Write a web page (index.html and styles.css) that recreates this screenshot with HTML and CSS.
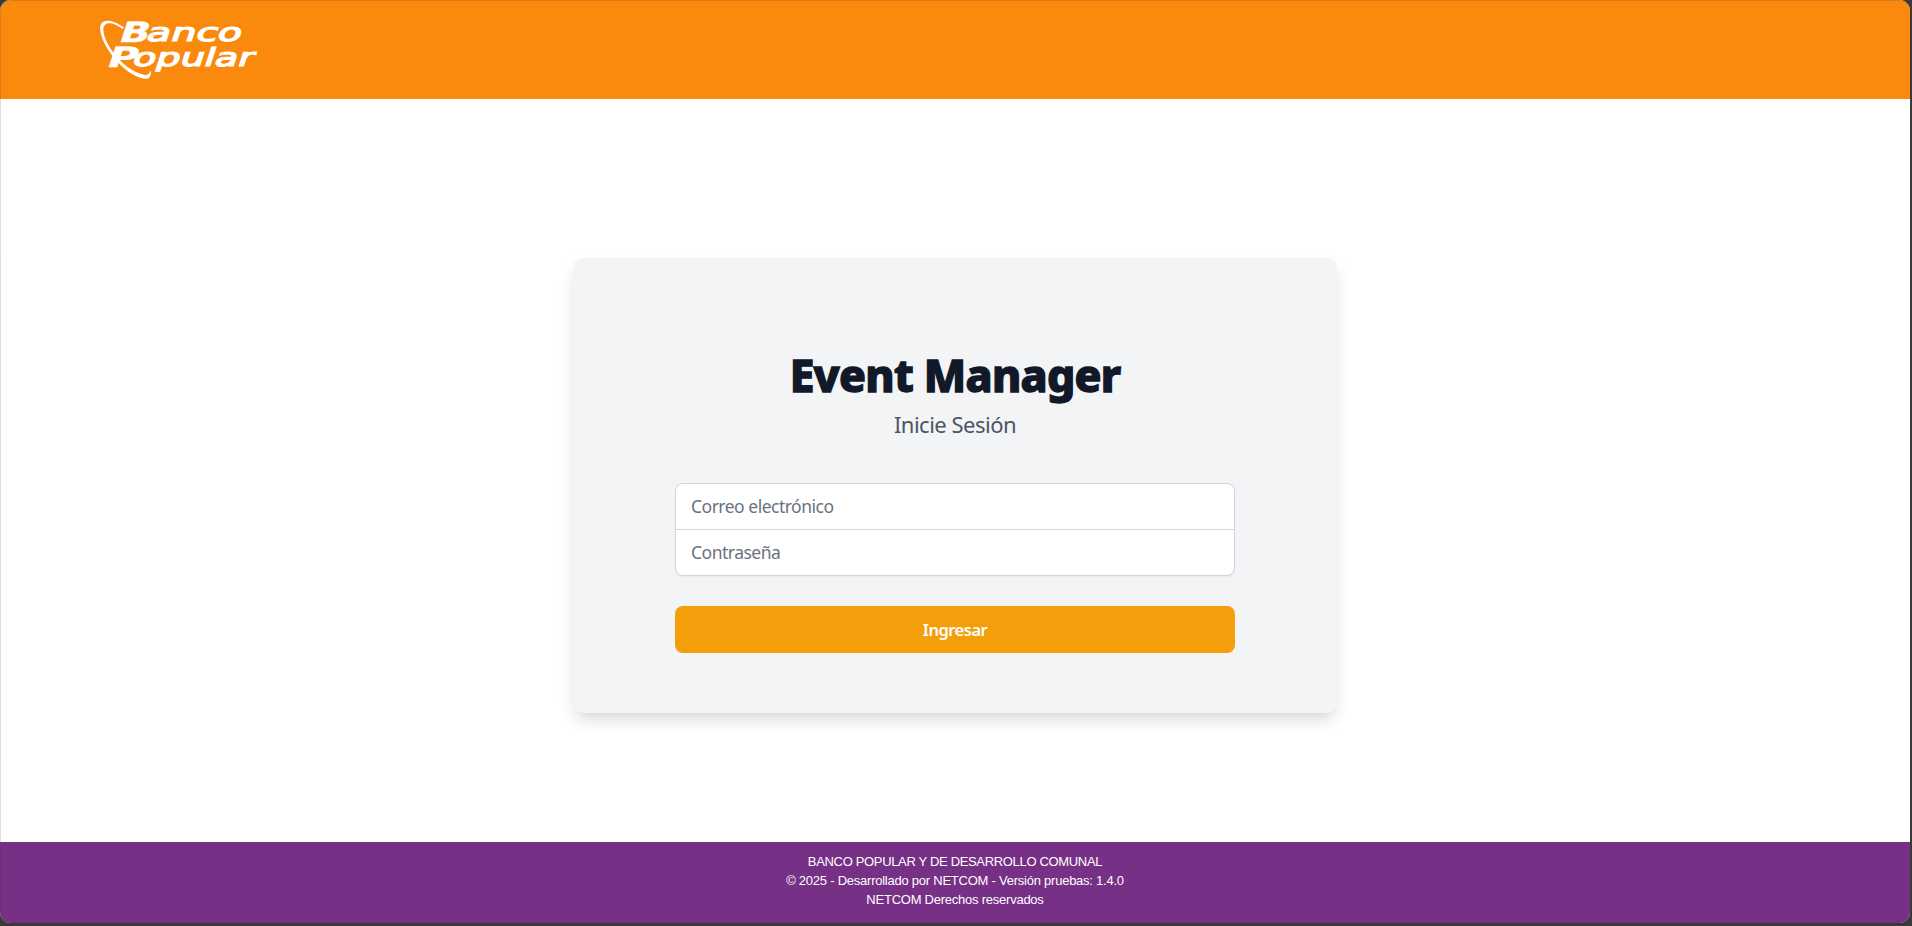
FILE: index.html
```html
<!DOCTYPE html>
<html lang="es">
<head>
<meta charset="utf-8">
<title>Event Manager</title>
<link rel="stylesheet" href="styles.css">
</head>
<body>
<div class="window">
  <header class="header">
    <svg class="logo" width="170" height="70" viewBox="94 14 170 70" role="img" aria-label="Banco Popular">
      <path class="swoosh" d="M124 27.500C112 18.500 99 17.500 100.200 30C102 47 124 75.500 145 78.800C149.500 79 151 77 151 70C149.500 74 147.500 75.500 144 74.800C124 70.500 105 46 103.400 31C102.500 21 112 21 122.500 28.900Z"/>
      <g class="logo-text">
        <text class="cap" transform="translate(117.500 41.500) skewX(-18)" textLength="30" lengthAdjust="spacingAndGlyphs">B</text>
        <text class="rest" transform="translate(145 41) skewX(-18)" textLength="95" lengthAdjust="spacingAndGlyphs">anco</text>
        <text class="cap" transform="translate(105.500 66.500) skewX(-18)" textLength="30" lengthAdjust="spacingAndGlyphs">P</text>
        <text class="rest" transform="translate(131 66) skewX(-18)" textLength="121" lengthAdjust="spacingAndGlyphs">opular</text>
      </g>
    </svg>
  </header>
  <main class="main">
    <section class="card">
      <h1 class="title">Event Manager</h1>
      <p class="subtitle">Inicie Sesión</p>
      <form class="form">
        <div class="fields">
          <input class="field email" type="email" placeholder="Correo electrónico" aria-label="Correo electrónico">
          <input class="field password" type="password" placeholder="Contraseña" aria-label="Contraseña">
        </div>
        <button class="submit" type="button">Ingresar</button>
      </form>
    </section>
  </main>
  <footer class="footer">
    <p class="line name">BANCO POPULAR Y DE DESARROLLO COMUNAL</p>
    <p class="line version">© 2025 - Desarrollado por NETCOM - Versión pruebas: 1.4.0</p>
    <p class="line rights">NETCOM Derechos reservados</p>
  </footer>
</div>
</body>
</html>
```
FILE: styles.css
```css
* { box-sizing: border-box; }
body {
  margin: 0;
  background: #3b3a3b;
  font-family: "Noto Sans", "Open Sans", sans-serif;
}
.window {
  position: relative;
  display: flex;
  flex-direction: column;
  width: 1910px;
  height: 923px;
  overflow: hidden;
  border-radius: 11px;
  background: #fff;
}
.window::after {
  content: "";
  position: absolute;
  inset: 0;
  border: 1px solid rgba(60, 60, 60, .17);
  border-right: 0;
  border-radius: 11px;
  pointer-events: none;
}
.header {
  height: 99px;
  flex: none;
  padding: 14px 94px;
  background: #fa8a0e;
}
.logo { display: block; }
.swoosh { fill: #fff; }
.logo-text { fill: #fff; font-family: "DejaVu Sans", sans-serif; }
.cap { font-size: 28px; font-weight: 700; stroke: #fff; stroke-width: .4px; }
.rest { font-size: 25px; stroke: #fff; stroke-width: 1.2px; }
.main {
  flex: 1;
  display: flex;
  justify-content: center;
  align-items: center;
}
.card {
  width: 764px;
  height: 455px;
  margin-top: 30px;
  padding: 87px 102px 0;
  border-radius: 10px;
  background: #f3f4f6;
  box-shadow: 0 10px 15px -3px rgba(0, 0, 0, .1), 0 4px 6px -4px rgba(0, 0, 0, .06), 0 6px 22px rgba(0, 0, 0, .04);
}
.title {
  margin: 0;
  height: 60px;
  line-height: 60px;
  text-align: center;
  white-space: nowrap;
  font-size: 44.5px;
  font-weight: 800;
  letter-spacing: -.75px;
  -webkit-text-stroke: 1.3px #111827;
  color: #111827;
}
.subtitle {
  margin: 3px 0 0;
  height: 32px;
  line-height: 32px;
  text-align: center;
  font-size: 22px;
  letter-spacing: -.5px;
  color: #4b5563;
}
.form { margin-top: 43px; }
.fields {
  display: flex;
  flex-direction: column;
  height: 93px;
  border: 1px solid #d1d5db;
  border-radius: 8px;
  overflow: hidden;
  background: #fff;
  box-shadow: 0 1px 2px rgba(0, 0, 0, .05);
}
.field {
  flex: 1;
  min-height: 0;
  padding: 0 15px 1px;
  border: 0;
  outline: 0;
  background: transparent;
  font: 17.5px "Noto Sans", "Open Sans", sans-serif;
  letter-spacing: -.5px;
}
.field + .field { border-top: 1px solid #d1d5db; }
.field::placeholder { color: #6b7280; opacity: 1; }
.submit {
  display: block;
  width: 100%;
  height: 47px;
  margin-top: 30px;
  border: 0;
  border-radius: 8px;
  background: #f59e0b;
  color: #fff;
  font: 600 16.5px "Noto Sans", "Open Sans", sans-serif;
  letter-spacing: -.5px;
}
.footer {
  flex: none;
  height: 81px;
  padding-top: 10px;
  background: #763085;
  color: #fff;
  text-align: center;
  font-family: "Liberation Sans", Arial, sans-serif;
  font-size: 13px;
  letter-spacing: -.24px;
}
.line { margin: 0; line-height: 19px; }
.name { letter-spacing: -.33px; }
```
